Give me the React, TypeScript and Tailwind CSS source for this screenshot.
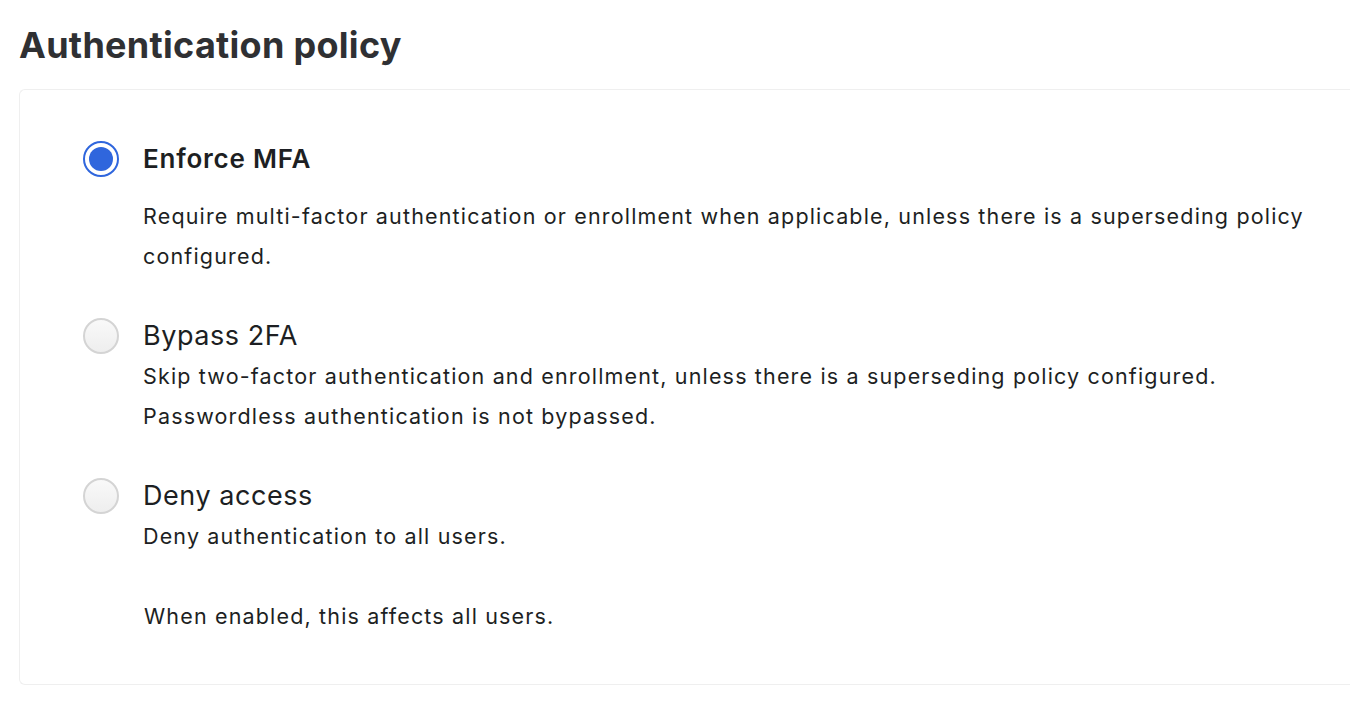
import { useState } from 'react';

type Policy = {
  id: string;
  title: string;
  description: string[];
};

const policies: Policy[] = [
  {
    id: 'enforce',
    title: 'Enforce MFA',
    description: [
      'Require multi-factor authentication or enrollment when applicable, unless there is a superseding policy',
      'configured.',
    ],
  },
  {
    id: 'bypass',
    title: 'Bypass 2FA',
    description: [
      'Skip two-factor authentication and enrollment, unless there is a superseding policy configured.',
      'Passwordless authentication is not bypassed.',
    ],
  },
  {
    id: 'deny',
    title: 'Deny access',
    description: ['Deny authentication to all users.'],
  },
];

function Radio({ checked }: { checked: boolean }) {
  if (checked) {
    return (
      <span className="flex h-[36px] w-[36px] shrink-0 items-center justify-center rounded-full border-[2.5px] border-[#2f66dd] bg-white">
        <span className="h-[24px] w-[24px] rounded-full bg-[#2f66dd]" />
      </span>
    );
  }
  return (
    <span className="h-[36px] w-[36px] shrink-0 rounded-full border-2 border-[#d4d4d4] bg-gradient-to-b from-[#f9f9f9] to-[#eeeeee]" />
  );
}

export default function App() {
  const [selected, setSelected] = useState('enforce');

  return (
    <div
      className="min-h-screen overflow-hidden bg-white pl-[19px] text-[#1d1f23]"
      style={{ fontFamily: 'Inter, "Noto Sans", sans-serif' }}
    >
      <h1 className="pt-[21px] text-[36px] font-bold leading-[48px] tracking-[0.008em] text-[#2f3033]">
        Authentication policy
      </h1>

      <div className="mt-[20px] rounded-l-md border border-r-0 border-[#efefef] pb-[48px] pl-[63px] pt-[49px]">
        <div className="flex flex-col gap-[40px]">
          {policies.map((p) => {
            const checked = selected === p.id;
            return (
              <label key={p.id} className="flex cursor-pointer gap-[24px]" onClick={() => setSelected(p.id)}>
                <div className="flex h-[40px] items-center">
                  <Radio checked={checked} />
                </div>
                <div>
                  <div
                    className={
                      checked
                        ? 'mb-[17px] text-[26px] font-semibold leading-[40px] tracking-[0.03em]'
                        : 'text-[27px] leading-[40px] tracking-[0.02em]'
                    }
                  >
                    {p.title}
                  </div>
                  {p.description.map((line) => (
                    <p key={line} className="text-[21.5px] leading-[40px] tracking-[0.054em]">
                      {line}
                    </p>
                  ))}
                </div>
              </label>
            );
          })}

          <p className="pl-[61px] text-[21.5px] leading-[40px] tracking-[0.054em]">When enabled, this affects all users.</p>
        </div>
      </div>
    </div>
  );
}
